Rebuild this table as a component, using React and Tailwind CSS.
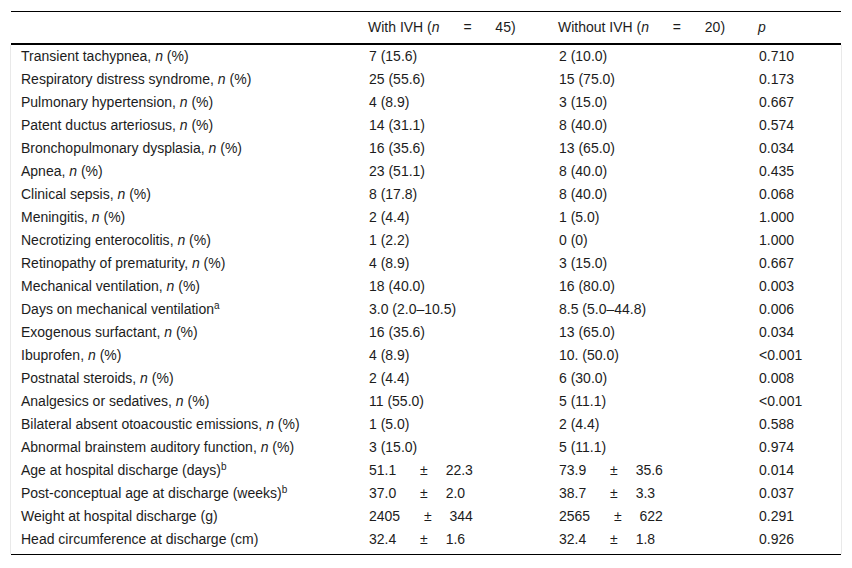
import React from "react";

const rows = [
  ["Transient tachypnea", true, "7 (15.6)", "2 (10.0)", "0.710"],
  ["Respiratory distress syndrome", true, "25 (55.6)", "15 (75.0)", "0.173"],
  ["Pulmonary hypertension", true, "4 (8.9)", "3 (15.0)", "0.667"],
  ["Patent ductus arteriosus", true, "14 (31.1)", "8 (40.0)", "0.574"],
  ["Bronchopulmonary dysplasia", true, "16 (35.6)", "13 (65.0)", "0.034"],
  ["Apnea", true, "23 (51.1)", "8 (40.0)", "0.435"],
  ["Clinical sepsis", true, "8 (17.8)", "8 (40.0)", "0.068"],
  ["Meningitis", true, "2 (4.4)", "1 (5.0)", "1.000"],
  ["Necrotizing enterocolitis", true, "1 (2.2)", "0 (0)", "1.000"],
  ["Retinopathy of prematurity", true, "4 (8.9)", "3 (15.0)", "0.667"],
  ["Mechanical ventilation", true, "18 (40.0)", "16 (80.0)", "0.003"],
  ["Days on mechanical ventilation", "a", "3.0 (2.0\u201310.5)", "8.5 (5.0\u201344.8)", "0.006"],
  ["Exogenous surfactant", true, "16 (35.6)", "13 (65.0)", "0.034"],
  ["Ibuprofen", true, "4 (8.9)", "10. (50.0)", "<0.001"],
  ["Postnatal steroids", true, "2 (4.4)", "6 (30.0)", "0.008"],
  ["Analgesics or sedatives", true, "11 (55.0)", "5 (11.1)", "<0.001"],
  ["Bilateral absent otoacoustic emissions", true, "1 (5.0)", "2 (4.4)", "0.588"],
  ["Abnormal brainstem auditory function", true, "3 (15.0)", "5 (11.1)", "0.974"],
  ["Age at hospital discharge (days)", "b", ["51.1", "22.3"], ["73.9", "35.6"], "0.014"],
  ["Post-conceptual age at discharge (weeks)", "b", ["37.0", "2.0"], ["38.7", "3.3"], "0.037"],
  ["Weight at hospital discharge (g)", false, ["2405", "344"], ["2565", "622"], "0.291"],
  ["Head circumference at discharge (cm)", false, ["32.4", "1.6"], ["32.4", "1.8"], "0.926"],
];

function Value({ v }) {
  if (Array.isArray(v)) {
    return (
      <span className="whitespace-pre">
        {v[0]}
        {"\u2003\u2002\u2009"}±{"\u2003 "}
        {v[1]}
      </span>
    );
  }
  return <span>{v}</span>;
}

function Label({ text, mark }) {
  return (
    <span>
      {text}
      {mark === true && (
        <>
          , <i>n</i> (%)
        </>
      )}
      {typeof mark === "string" && <sup className="text-[10px]">{mark}</sup>}
    </span>
  );
}

export default function App() {
  return (
    <div
      className="bg-white min-h-screen pt-[11px] pl-[11px] text-[14px] text-[#1c1c1c]"
      style={{ fontFamily: '"Liberation Sans", Arial, sans-serif' }}
    >
      <div className="w-[830px]">
        <div className="grid grid-cols-[348px_190px_200px_92px] h-[34px] items-center border-t border-b-2 border-black">
          <div />
          <div className="pl-[9px] whitespace-pre">
            With IVH (<i>n</i>
            {"\u2003\u2002\u2009=\u2003\u2002\u2009"}45)
          </div>
          <div className="pl-[9px] whitespace-pre">
            Without IVH (<i>n</i>
            {"\u2003\u2002\u2009=\u2003\u2002\u2009"}20)
          </div>
          <div className="pl-[9px]">
            <i>p</i>
          </div>
        </div>
        <div className="border-x border-[#e9e9e9] -mx-px pb-[3px] leading-[23px]">
          {rows.map((r, i) => (
            <div key={i} className="grid grid-cols-[349px_190px_200px_92px] h-[23px] items-center">
              <div className="pl-[10px]">
                <Label text={r[0]} mark={r[1]} />
              </div>
              <div className="pl-[9px]">
                <Value v={r[2]} />
              </div>
              <div className="pl-[9px]">
                <Value v={r[3]} />
              </div>
              <div className="pl-[9px]">{r[4]}</div>
            </div>
          ))}
        </div>
        <div className="border-t border-black" />
      </div>
    </div>
  );
}
